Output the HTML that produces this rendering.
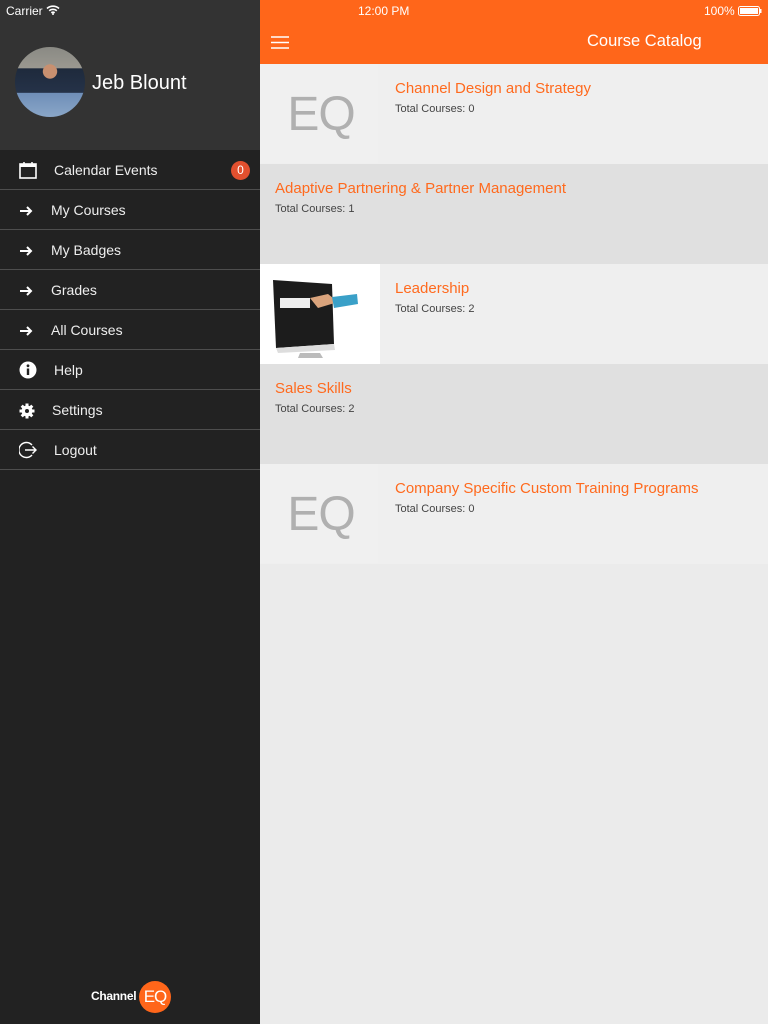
<!DOCTYPE html>
<html><head><meta charset="utf-8"><style>
*{margin:0;padding:0;box-sizing:border-box}
body{width:768px;height:1024px;overflow:hidden;font-family:"Liberation Sans",sans-serif;background:#ebebeb;position:relative}
#side{position:absolute;left:0;top:0;width:260px;height:1024px;background:#222}
#sh{height:150px;background:#333;position:relative}
.st{position:absolute;top:4px;font-size:12px;color:#fff}
#av{position:absolute;left:15px;top:47px;width:70px;height:70px;border-radius:50%;background:radial-gradient(circle at 50% 35%,#c89070 0 12%,transparent 13%),linear-gradient(180deg,#8a8a84 0,#9a9890 30%,#1e2a3c 31%,#253248 65%,#6f8fb8 66%,#8aa6c8 100%);}
#name{position:absolute;left:92px;top:72px;font-size:20px;color:#fff}
.it{height:40px;border-bottom:1px solid #4e4e4e;color:#eee;font-size:14px;position:relative;line-height:40px}
.it span{position:absolute;left:51px}
.it .ic{position:absolute;left:19px;top:12px}
.badge{position:absolute;right:10px;top:11px;width:19px;height:19px;border-radius:50%;background:#e2502f;color:#fff;font-size:12px;line-height:19px;text-align:center}
#main{position:absolute;left:260px;top:0;width:508px}
#nav{height:64px;background:#ff661a;position:relative;color:#fff}
.row{height:100px;position:relative}
.a{background:#efefef}.b{background:#e0e0e0}
.t{position:absolute;font-size:15px;color:#ff6a1e}
.s{position:absolute;font-size:11px;color:#444}
.eq{position:absolute;left:0;top:0;width:118px;height:99px;background:#f0f0f0;font-size:48px;color:#b0b0b0;text-align:center;line-height:102px;letter-spacing:-1px;padding-left:4px}
</style></head><body>
<div id="side">
 <div id="sh">
  <div class="st" style="left:6px">Carrier <svg width="14" height="10" viewBox="0 0 14 10" style="vertical-align:0"><path d="M1 3.5A9 9 0 0 1 13 3.5M3.2 5.7A6 6 0 0 1 10.8 5.7M5.3 7.8A3 3 0 0 1 8.7 7.8" stroke="#fff" stroke-width="1.6" fill="none"/><circle cx="7" cy="9" r="1" fill="#fff"/></svg></div>
  <div id="av"></div>
  <div id="name">Jeb Blount</div>
 </div>
 <div class="it"><svg class="ic" width="18" height="17" viewBox="0 0 18 17"><rect x="1" y="2" width="16" height="14" fill="none" stroke="#fff" stroke-width="1.6"/><rect x="1" y="2" width="16" height="3" fill="#fff"/><path d="M5 0v3M13 0v3" stroke="#fff" stroke-width="1.5"/></svg><span style="left:54px">Calendar Events</span><div class="badge">0</div></div>
 <div class="it"><svg class="ic" width="14" height="16" viewBox="0 0 14 16"><path d="M1 9h11M8 5l4 4-4 4" stroke="#fff" stroke-width="2" fill="none"/></svg><span>My Courses</span></div>
 <div class="it"><svg class="ic" width="14" height="16" viewBox="0 0 14 16"><path d="M1 9h11M8 5l4 4-4 4" stroke="#fff" stroke-width="2" fill="none"/></svg><span>My Badges</span></div>
 <div class="it"><svg class="ic" width="14" height="16" viewBox="0 0 14 16"><path d="M1 9h11M8 5l4 4-4 4" stroke="#fff" stroke-width="2" fill="none"/></svg><span>Grades</span></div>
 <div class="it"><svg class="ic" width="14" height="16" viewBox="0 0 14 16"><path d="M1 9h11M8 5l4 4-4 4" stroke="#fff" stroke-width="2" fill="none"/></svg><span>All Courses</span></div>
 <div class="it"><svg class="ic" width="18" height="18" viewBox="0 0 18 18" style="top:11px"><circle cx="9" cy="9" r="8.5" fill="#fff"/><rect x="7.8" y="7.5" width="2.4" height="6.5" fill="#222"/><circle cx="9" cy="4.8" r="1.4" fill="#222"/></svg><span style="left:54px">Help</span></div>
 <div class="it"><svg class="ic" width="16" height="16" viewBox="0 0 16 16" style="top:13px"><circle cx="8" cy="8" r="5.5" fill="#fff"/><path d="M8 0.5v15M0.5 8h15M2.7 2.7l10.6 10.6M13.3 2.7L2.7 13.3" stroke="#fff" stroke-width="3"/><circle cx="8" cy="8" r="2" fill="#222"/></svg><span style="left:52px">Settings</span></div>
 <div class="it"><svg class="ic" width="18" height="18" viewBox="0 0 18 18" style="top:11px"><path d="M13 4A7.5 7.5 0 1 0 13 14" stroke="#fff" stroke-width="1.4" fill="none"/><path d="M6 9h11M13.5 5.5L17 9l-3.5 3.5" stroke="#fff" stroke-width="1.4" fill="none"/></svg><span style="left:54px">Logout</span></div>
 <div style="position:absolute;left:91px;top:989px;color:#fff;font-size:12px;font-weight:bold;letter-spacing:-0.3px">Channel</div>
 <div style="position:absolute;left:139px;top:981px;width:32px;height:32px;border-radius:50%;background:#ff661a;color:#fff;font-size:17px;line-height:32px;text-align:center;letter-spacing:-1px">EQ</div>
</div>
<div id="main">
 <div id="nav">
  <div class="st" style="left:98px">12:00 PM</div>
  <div class="st" style="left:444px">100% <svg width="24" height="10" viewBox="0 0 24 10" style="vertical-align:-1px"><rect x="0.5" y="0.5" width="21" height="9" rx="2" fill="none" stroke="#fff"/><rect x="2" y="2" width="18" height="6" fill="#fff"/><rect x="22" y="3" width="1.5" height="4" fill="#fff"/></svg></div>
  <svg style="position:absolute;left:11px;top:36px" width="18" height="13" viewBox="0 0 18 13"><path d="M0 1h18M0 6.5h18M0 12h18" stroke="#fff" stroke-width="1.6"/></svg>
  <div style="position:absolute;left:327px;top:32px;font-size:16.5px">Course Catalog</div>
 </div>
 <div class="row a"><div class="eq">EQ</div><div class="t" style="left:135px;top:16px">Channel Design and Strategy</div><div class="s" style="left:135px;top:39px">Total Courses: 0</div></div>
 <div class="row b"><div class="t" style="left:15px;top:16px">Adaptive Partnering &amp; Partner Management</div><div class="s" style="left:15px;top:39px">Total Courses: 1</div></div>
 <div class="row a"><div style="position:absolute;left:0;top:0;width:120px;height:100px;background:#fff"><svg width="120" height="100" viewBox="0 0 120 100"><path d="M13 16L72 20 74 80 16 84Z" fill="#1c1c1c"/><path d="M16 84L74 80 75 86 18 89Z" fill="#ddd"/><path d="M40 89h20l3 5H38Z" fill="#bbb"/><rect x="20" y="34" width="30" height="10" fill="#eee"/><path d="M50 34l18-4 10 8-20 6Z" fill="#d9a37c"/><path d="M72 33l25-3 1 10-24 4Z" fill="#3aa0c8"/></svg></div><div class="t" style="left:135px;top:16px">Leadership</div><div class="s" style="left:135px;top:39px">Total Courses: 2</div></div>
 <div class="row b"><div class="t" style="left:15px;top:16px">Sales Skills</div><div class="s" style="left:15px;top:39px">Total Courses: 2</div></div>
 <div class="row a"><div class="eq">EQ</div><div class="t" style="left:135px;top:16px">Company Specific Custom Training Programs</div><div class="s" style="left:135px;top:39px">Total Courses: 0</div></div>
</div>
</body></html>
